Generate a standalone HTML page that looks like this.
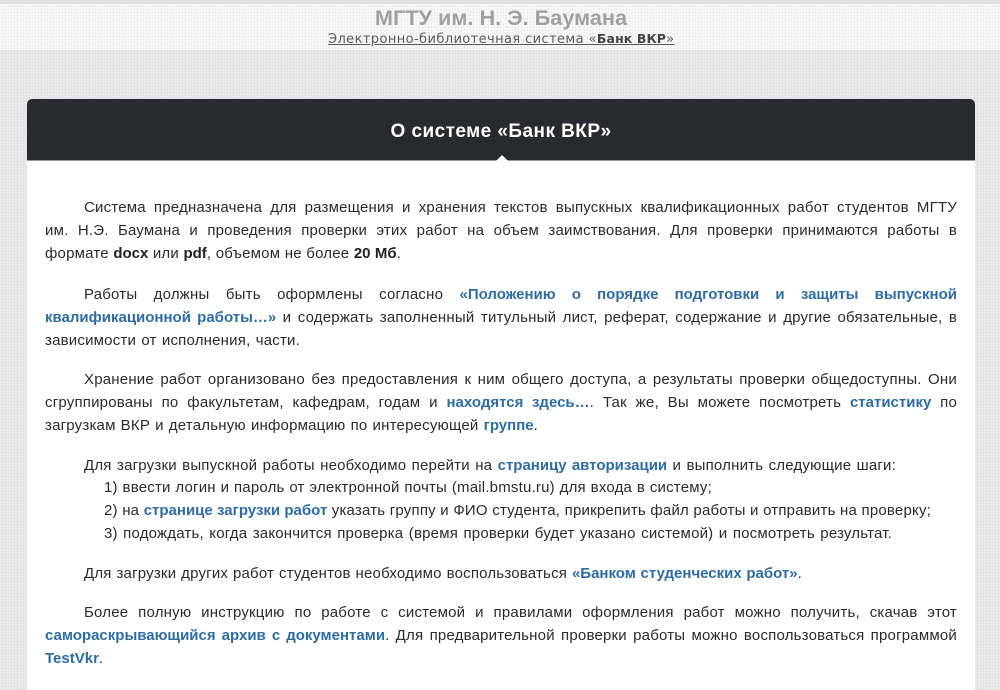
<!DOCTYPE html>
<html lang="ru"><head><meta charset="utf-8"><title>О системе «Банк ВКР»</title>
<style>
html,body{margin:0;padding:0;width:1000px;height:690px;overflow:hidden}
body{position:relative;background-color:#e5e5e5;background-image:radial-gradient(circle at 1px 1px,#ececec 0.9px,transparent 1.1px),radial-gradient(circle at 2.5px 2.5px,#dedede 0.8px,transparent 1px);background-size:3px 3px;font-family:"Liberation Sans",sans-serif}
#strip{position:absolute;left:0;top:0;width:1000px;height:4px;background:#dfdfdf}
#top{position:absolute;left:0;top:4px;width:1000px;height:46px;background-color:#f3f3f3;background-image:radial-gradient(circle at 1px 1px,#f9f9f9 0.9px,transparent 1.1px),radial-gradient(circle at 2.5px 2.5px,#ebebeb 0.8px,transparent 1px);background-size:3px 3px}
#t1{position:absolute;left:1px;top:4px;width:1000px;text-align:center;font-size:21.7px;font-weight:bold;line-height:27px;color:#a0a0a0;white-space:nowrap}
#t2{position:absolute;left:328px;top:31px;width:345px;text-align:center;font-family:"DejaVu Sans",sans-serif;font-size:13px;line-height:16px;letter-spacing:.4px;color:#5c5c5c;text-decoration:underline;white-space:nowrap}
#t2 b{color:#444;letter-spacing:.1px;font-size:12.5px}
#card{position:absolute;left:27px;top:99px;width:948px;height:591px;background:#fff;border-radius:5px 5px 0 0}
#head{position:absolute;left:27px;top:99px;width:948px;height:61px;background:#292a31;border-radius:5px 5px 0 0;border-bottom:1px solid #9a9a9a}
#notch{position:absolute;left:496px;top:155px;width:0;height:0;border-left:6px solid transparent;border-right:6px solid transparent;border-bottom:6px solid #fff}
#title{position:absolute;left:27px;top:120px;width:948px;text-align:center;font-size:19px;font-weight:bold;line-height:24px;color:#fff;letter-spacing:.45px;white-space:nowrap}
.l{position:absolute;height:23px;line-height:23px;font-size:15px;letter-spacing:.2px;color:#2b2b2b;white-space:normal;text-align:justify;text-align-last:justify;overflow:visible}
.l b{color:#222;letter-spacing:0}
.l a{color:#2e6da4;font-weight:bold;text-decoration:none;letter-spacing:0}
</style></head><body>
<div id="strip"></div><div id="top"></div>
<div id="t1">МГТУ им. Н. Э. Баумана</div>
<div id="t2">Электронно-библиотечная система «<b>Банк ВКР</b>»</div>
<div id="card"></div><div id="head"></div><div id="notch"></div>
<div id="title">О системе «Банк ВКР»</div>

<div class="l" style="left:84px;top:196px;width:873px">Система предназначена для размещения и хранения текстов выпускных квалификационных работ студентов МГТУ</div>
<div class="l" style="left:45px;top:219px;width:912px">им. Н.Э. Баумана и проведения проверки этих работ на объем заимствования. Для проверки принимаются работы в</div>
<div class="l" style="left:45px;top:242px;width:356px">формате <b>docx</b> или <b>pdf</b>, объемом не более <b>20 Мб</b>.</div>

<div class="l" style="left:84px;top:283px;width:873px">Работы должны быть оформлены согласно <a>«Положению о порядке подготовки и защиты выпускной</a></div>
<div class="l" style="left:45px;top:306px;width:912px"><a>квалификационной работы…»</a> и содержать заполненный титульный лист, реферат, содержание и другие обязательные, в</div>
<div class="l" style="left:45px;top:329px;width:255px">зависимости от исполнения, части.</div>

<div class="l" style="left:84px;top:368px;width:873px">Хранение работ организовано без предоставления к ним общего доступа, а результаты проверки общедоступны. Они</div>
<div class="l" style="left:45px;top:391px;width:912px">сгруппированы по факультетам, кафедрам, годам и <a>находятся здесь…</a>. Так же, Вы можете посмотреть <a>статистику</a> по</div>
<div class="l" style="left:45px;top:414px;width:493px">загрузкам ВКР и детальную информацию по интересующей <a>группе</a>.</div>

<div class="l" style="left:84px;top:454px;width:812px">Для загрузки выпускной работы необходимо перейти на <a>страницу авторизации</a> и выполнить следующие шаги:</div>
<div class="l" style="left:104px;top:476px;width:608px">1) ввести логин и пароль от электронной почты (mail.bmstu.ru) для входа в систему;</div>
<div class="l" style="left:104px;top:499px;width:827px">2) на <a>странице загрузки работ</a> указать группу и ФИО студента, прикрепить файл работы и отправить на проверку;</div>
<div class="l" style="left:104px;top:522px;width:788px">3) подождать, когда закончится проверка (время проверки будет указано системой) и посмотреть результат.</div>

<div class="l" style="left:84px;top:562px;width:718px">Для загрузки других работ студентов необходимо воспользоваться <a>«Банком студенческих работ»</a>.</div>

<div class="l" style="left:84px;top:601px;width:873px">Более полную инструкцию по работе с системой и правилами оформления работ можно получить, скачав этот</div>
<div class="l" style="left:45px;top:624px;width:912px"><a>самораскрывающийся архив с документами</a>. Для предварительной проверки работы можно воспользоваться программой</div>
<div class="l" style="left:45px;top:647px;width:58px"><a>TestVkr</a>.</div>
</body></html>
